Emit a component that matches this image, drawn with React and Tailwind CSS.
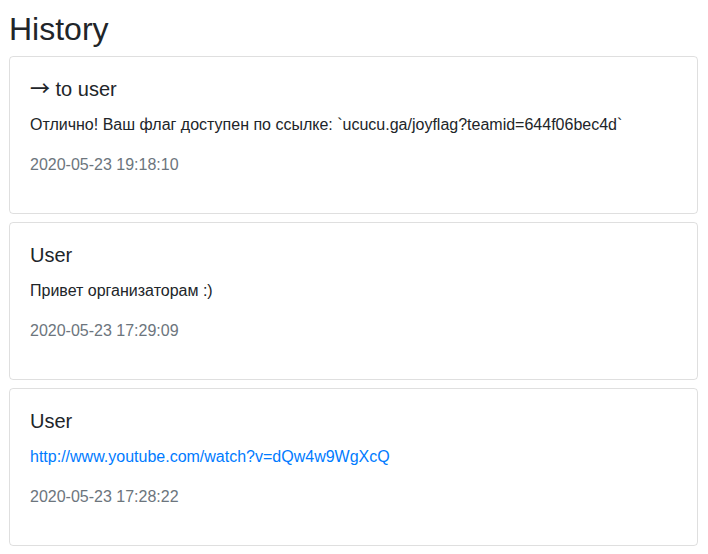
export default function App() {
  const items = [
    { arrow: true, title: "to user", body: "Отлично! Ваш флаг доступен по ссылке: `ucucu.ga/joyflag?teamid=644f06bec4d`", date: "2020-05-23 19:18:10" },
    { title: "User", body: "Привет организаторам :)", date: "2020-05-23 17:29:09" },
    { title: "User", body: "http://www.youtube.com/watch?v=dQw4w9WgXcQ", link: true, date: "2020-05-23 17:28:22" },
  ];
  return (
    <div className="pl-[9px] pr-[10px] pt-[10px] text-[#212529] bg-white font-['Liberation_Sans',Arial,sans-serif]">
      <h2 className="text-[32px] leading-[1.2] font-medium mb-2">History</h2>
      {items.map((it, i) => (
        <div key={i} className="border border-[rgba(0,0,0,0.125)] rounded-[4px] p-5 mb-2">
          <h5 className="text-[20px] leading-[1.2] h-6 font-medium mb-3">
            {it.arrow && <span className="font-['Noto_Sans_CJK_SC',sans-serif] leading-none">→</span>}
            {it.arrow ? " " : ""}
            {it.title}
          </h5>
          <p className="text-[16px] leading-6 mb-4">
            {it.link ? <a href="#" className="text-[#007bff]">{it.body}</a> : it.body}
          </p>
          <p className="text-[16px] leading-6 mb-4 text-[#6c757d]">{it.date}</p>
        </div>
      ))}
    </div>
  );
}
